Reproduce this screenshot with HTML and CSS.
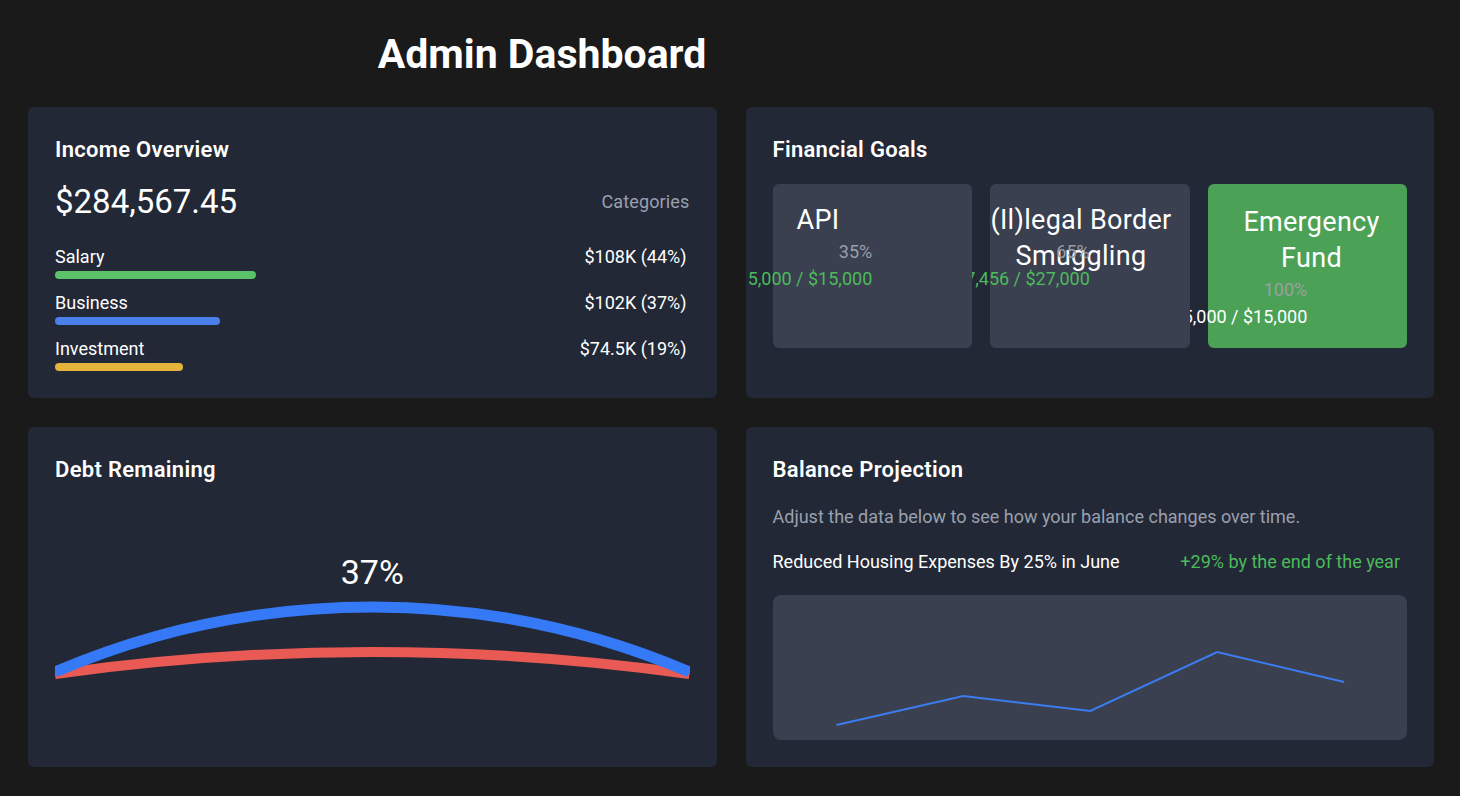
FILE: index.html
```html
<!DOCTYPE html>
<html lang="en">
<head>
<meta charset="utf-8">
<title>Admin Dashboard</title>
<link rel="stylesheet" href="styles.css">
</head>
<body>
<div class="page">
  <header class="header">
    <h1 class="page-title">Admin Dashboard</h1>
  </header>
  <main class="grid">
    <section class="card income">
      <h2 class="card-title">Income Overview</h2>
      <div class="income-head">
        <div class="income-total">$284,567.45</div>
        <div class="muted categories">Categories</div>
      </div>
      <div class="cat-list">
        <div class="cat">
          <div class="cat-row"><span>Salary</span><span>$108K (44%)</span></div>
          <div class="bar bar-green" style="width:201px"></div>
        </div>
        <div class="cat">
          <div class="cat-row"><span>Business</span><span>$102K (37%)</span></div>
          <div class="bar bar-blue" style="width:165px"></div>
        </div>
        <div class="cat">
          <div class="cat-row"><span>Investment</span><span>$74.5K (19%)</span></div>
          <div class="bar bar-yellow" style="width:128px"></div>
        </div>
      </div>
    </section>

    <section class="card goals">
      <h2 class="card-title">Financial Goals</h2>
      <div class="goal-list">
        <div class="goal goal-a">
          <div class="goal-title">API</div>
          <div class="goal-stats">
            <div class="goal-pct">35%</div>
            <div class="goal-amt">$15,000 / $15,000</div>
          </div>
        </div>
        <div class="goal goal-b">
          <div class="goal-title goal-title-wide">(Il)legal Border Smuggling</div>
          <div class="goal-stats">
            <div class="goal-pct">65%</div>
            <div class="goal-amt">$17,456 / $27,000</div>
          </div>
        </div>
        <div class="goal goal-c goal-done">
          <div class="goal-title goal-title-center">Emergency Fund</div>
          <div class="goal-stats">
            <div class="goal-pct">100%</div>
            <div class="goal-amt">$15,000 / $15,000</div>
          </div>
        </div>
      </div>
    </section>

    <section class="card debt">
      <h2 class="card-title">Debt Remaining</h2>
      <div class="gauge">
        <div class="gauge-value">37%</div>
        <svg class="gauge-svg" viewBox="0 0 634 90" preserveAspectRatio="none">
          <path d="M0 79 A 2295 2295 0 0 1 634 79" fill="none" stroke="#ea5a54" stroke-width="10"/>
          <path d="M0 77 A 805 805 0 0 1 634 77" fill="none" stroke="#3579f6" stroke-width="11"/>
        </svg>
      </div>
    </section>

    <section class="card balance">
      <h2 class="card-title">Balance Projection</h2>
      <p class="muted balance-sub">Adjust the data below to see how your balance changes over time.</p>
      <div class="balance-row">
        <span>Reduced Housing Expenses By 25% in June</span>
        <span class="positive">+29% by the end of the year</span>
      </div>
      <div class="chart">
        <svg class="chart-svg" viewBox="0 0 635 145">
          <polyline points="63.5,130 190.5,101 317.5,116 444.5,57 571.5,87" fill="none" stroke="#3b7cf0" stroke-width="2"/>
        </svg>
      </div>
    </section>
  </main>
</div>
</body>
</html>
```

FILE: styles.css
```css
* { box-sizing: border-box; }

html, body {
  margin: 0;
  background: #1a1a1a;
  color: #ffffff;
  font-family: Roboto, "Liberation Sans", Arial, sans-serif;
}

.page {
  width: 1460px;
  height: 796px;
  padding: 28px 26px 28px 28px;
}

.header {
  height: 52px;
  padding-right: 378px;
  text-align: center;
  margin-bottom: 27px;
}

.page-title {
  margin: 0;
  font-size: 41px;
  line-height: 52px;
  font-weight: 700;
}

.grid {
  display: grid;
  grid-template-columns: minmax(0, 1fr) minmax(0, 1fr);
  column-gap: 29px;
  row-gap: 29px;
}

.card {
  background: #222836;
  border-radius: 6px;
  padding: 28px 27px 27px;
}

.card-title {
  margin: 0;
  font-size: 22px;
  line-height: 30px;
  font-weight: 600;
  letter-spacing: 0.3px;
}

.muted { color: #9aa0ad; }

/* Income */
.income-head {
  display: flex;
  justify-content: space-between;
  align-items: center;
  margin-top: 17px;
}

.income-total {
  font-size: 33px;
  line-height: 40px;
}

.categories {
  font-size: 18px;
  line-height: 22px;
  letter-spacing: 0.15px;
}

.cat-list {
  margin-top: 24px;
  display: flex;
  flex-direction: column;
  gap: 13px;
  padding-right: 3px;
}

.cat-row {
  display: flex;
  justify-content: space-between;
  font-size: 18px;
  line-height: 22px;
}

.bar {
  height: 8px;
  border-radius: 4px;
  margin-top: 3px;
}
.bar-green { background: #5bc26a; }
.bar-blue { background: #4a80ea; }
.bar-yellow { background: #e5b43d; }

/* Goals */
.goals { overflow: hidden; }

.goal-list {
  margin-top: 19px;
  display: grid;
  grid-template-columns: repeat(3, minmax(0, 1fr));
  gap: 18px;
}

.goal {
  position: relative;
  height: 164px;
  background: #3a4050;
  border-radius: 6px;
  padding: 18px 24px 0;
}
.goal-a { z-index: 3; }
.goal-b { z-index: 2; }
.goal-c { z-index: 1; padding-top: 20px; }
.goal-done { background: #4ba257; }

.goal-title {
  font-size: 27px;
  line-height: 36px;
  letter-spacing: 0.3px;
  margin-bottom: 3px;
  white-space: nowrap;
}
.goal-title-wide {
  white-space: normal;
  height: 36px;
  width: 184px;
  margin-left: -25px;
  text-align: center;
}
.goal-title-center {
  white-space: normal;
  width: 160px;
  text-align: center;
}

.goal-stats {
  width: 50%;
}
.goal-stats > div {
  display: flex;
  justify-content: flex-end;
  white-space: nowrap;
}

.goal-pct {
  font-size: 18px;
  line-height: 22px;
  color: #9a9ea8;
}
.goal-amt {
  font-size: 18px;
  line-height: 22px;
  margin-top: 5px;
  color: #4cbb5b;
}
.goal-done .goal-amt { color: #ffffff; }
.goal-done .goal-pct { color: #9aa0a2; }

/* Debt */
.gauge {
  margin-top: 67px;
  display: flex;
  flex-direction: column;
  align-items: center;
}
.gauge-value {
  font-size: 34px;
  line-height: 40px;
}
.gauge-svg {
  display: block;
  width: 100%;
  height: 90px;
  margin-top: 3px;
}

/* Balance */
.balance-sub {
  margin: 21px 0 0;
  font-size: 18px;
  line-height: 22px;
}
.balance-row {
  margin-top: 23px;
  display: flex;
  justify-content: space-between;
  font-size: 18px;
  line-height: 22px;
  padding-right: 7px;
}
.positive { color: #4cbb5b; }

.chart {
  margin-top: 22px;
  height: 145px;
  background: #3a4050;
  border-radius: 8px;
}
.chart-svg {
  display: block;
  width: 100%;
  height: 100%;
}
```
